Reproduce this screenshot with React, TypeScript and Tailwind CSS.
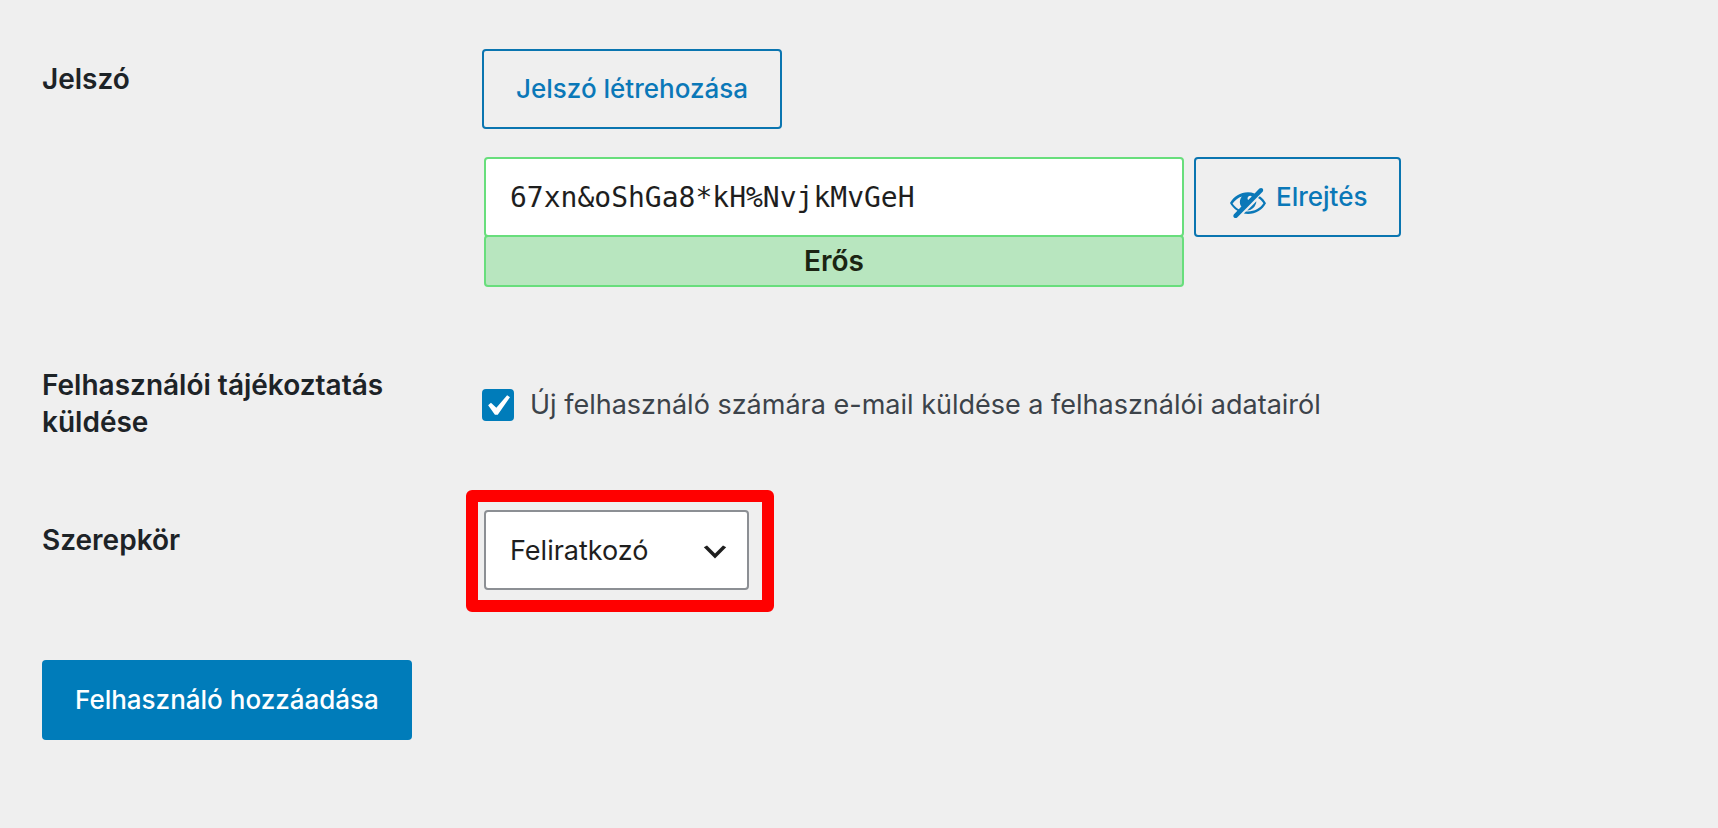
import { useState, type ReactNode } from "react";

interface FormRowProps {
  label: string;
  htmlFor: string;
  className?: string;
  children: ReactNode;
}

function FormRow({ label, htmlFor, className = "", children }: FormRowProps) {
  return (
    <div className={`flex items-start ${className}`}>
      <div className="w-[440px] shrink-0 pt-3 pr-10">
        <label htmlFor={htmlFor} className="block text-[28px] leading-[37px] font-semibold text-[#1d2327]">
          {label}
        </label>
      </div>
      <div className="min-w-0 flex-1">{children}</div>
    </div>
  );
}

function HiddenIcon() {
  return (
    <svg viewBox="0 0 20 20" fill="currentColor" aria-hidden="true" className="mt-3 size-10 shrink-0">
      <path d="M17.3 3.3c-.4-.4-1.1-.4-1.6 0l-2.4 2.4c-1.1-.4-2.2-.6-3.3-.6-3.8.1-7.2 2.1-9 5.4.2.4.5.8.8 1.2.8 1.1 1.8 2 2.9 2.7L3 16.1c-.4.4-.5 1.1 0 1.6.4.4 1.1.5 1.6 0L17.3 4.9c.4-.5.4-1.2 0-1.6zm-10.6 9l-1.3 1.3c-1.2-.7-2.3-1.7-3.1-2.9C3.5 9 5.1 7.8 7 7.2c-1.3 1.4-1.4 3.6-.3 5.1zM10.1 9c-.5-.5-.4-1.3.1-1.8.5-.4 1.2-.4 1.7 0L10.1 9z" />
      <path d="M14.2 9.6l-4.6 4.6c2.4-.1 4.4-2 4.6-4.6z" />
      <path d="M15.9 7.1l-.9.9c1.1.6 2 1.5 2.7 2.6-1.6 2.5-4.5 4.1-7.7 4.1h-1l-1.1 1.1c.7.1 1.4.2 2.1.2 3.9 0 7.3-2.2 9-5.4-.8-1.5-1.8-2.6-3.1-3.5z" />
    </svg>
  );
}

const outlineButton =
  "flex h-20 items-center rounded-[4px] border-2 border-[#0a75b0] pb-0.5 text-[26px] font-medium text-[#0a78b8]";

export default function App() {
  const [password, setPassword] = useState("67xn&oShGa8*kH%NvjkMvGeH");
  const [visible, setVisible] = useState(true);
  const [notify, setNotify] = useState(true);

  return (
    <main className="min-h-screen bg-[#efefef] px-[42px] pt-[49px] pb-20 font-['Inter',sans-serif]">
      <form onSubmit={(event) => event.preventDefault()}>
        <FormRow label="Jelszó" htmlFor="password">
          <button type="button" className={`${outlineButton} px-8`}>
            Jelszó létrehozása
          </button>
          <div className="mt-7 flex items-start gap-2.5 pl-0.5">
            <div className="w-[700px]">
              <input
                id="password"
                type={visible ? "text" : "password"}
                value={password}
                onChange={(event) => setPassword(event.target.value)}
                className="block h-20 w-full rounded-[4px] border-2 border-[#68de7c] bg-white px-6 font-['DejaVu_Sans_Mono',monospace] text-[28px] text-[#1e1e1e] outline-none"
              />
              <div className="-mt-0.5 flex h-[52px] items-center justify-center rounded-[4px] border-2 border-[#68de7c] bg-[#b8e6bf] text-[28px] font-semibold text-[#1b2412]">
                Erős
              </div>
            </div>
            <button type="button" onClick={() => setVisible(!visible)} className={`${outlineButton} gap-2 px-8`}>
              <HiddenIcon />
              Elrejtés
            </button>
          </div>
        </FormRow>

        <FormRow label="Felhasználói tájékoztatás küldése" htmlFor="notify" className="mt-[68px]">
          <label className="flex items-center gap-4 pt-[31px] text-[27px] leading-[37px] text-[#3c434a]">
            <span className="relative block size-8 shrink-0">
              <input
                id="notify"
                type="checkbox"
                checked={notify}
                onChange={() => setNotify(!notify)}
                className="block size-8 appearance-none rounded-[4px] border-2 border-[#007cba] bg-white checked:bg-[#007cba]"
              />
              {notify ? (
                <svg
                  viewBox="0 0 20 20"
                  fill="#fff"
                  aria-hidden="true"
                  className="pointer-events-none absolute -top-1 -left-1.5 size-[42px] max-w-none"
                >
                  <path d="M14.83 4.89l1.34.94-5.81 8.38H9.02L5.78 9.67l1.34-1.25 2.57 2.4z" />
                </svg>
              ) : null}
            </span>
            Új felhasználó számára e-mail küldése a felhasználói adatairól
          </label>
        </FormRow>

        <FormRow label="Szerepkör" htmlFor="role" className="mt-[69px]">
          <div className="relative ml-0.5 w-[265px]">
            <select
              id="role"
              className="block h-20 w-full appearance-none rounded-[4px] border-2 border-[#8c8f94] bg-white pt-0.5 pr-12 pl-6 text-[27px] text-[#1e1e1e]"
            >
              <option>Feliratkozó</option>
            </select>
            <svg
              viewBox="0 0 20 20"
              fill="#1e1e1e"
              aria-hidden="true"
              className="pointer-events-none absolute top-[26px] right-[18px] size-8"
            >
              <path d="M5 6l5 5 5-5 2 1-7 7-7-7 2-1z" />
            </svg>
            {/* highlight frame around the role field */}
            <div className="pointer-events-none absolute -top-5 -right-[25px] -bottom-[22px] -left-[18px] rounded-md border-12 border-[#ff0000]" />
          </div>
        </FormRow>

        <button type="submit" className="mt-[70px] h-20 rounded-[4px] bg-[#007cba] px-[33px] pb-0.5 text-[26px] font-medium text-white">
          Felhasználó hozzáadása
        </button>
      </form>
    </main>
  );
}
